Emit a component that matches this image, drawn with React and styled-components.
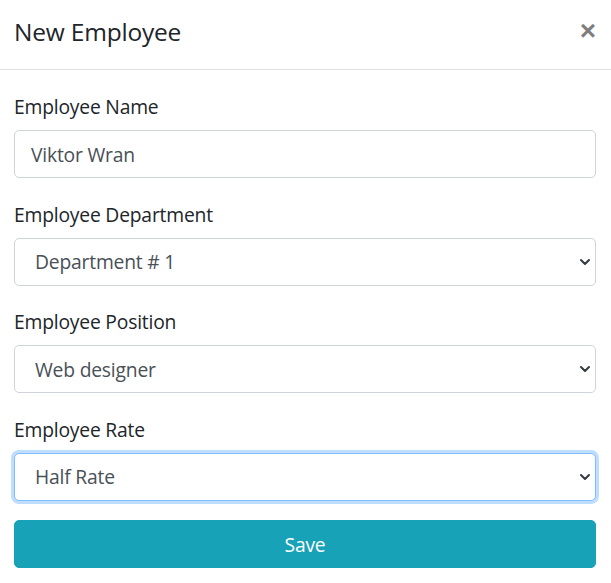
import styled, { createGlobalStyle } from "styled-components";

const GlobalStyle = createGlobalStyle`
  html, body {
    margin: 0;
    padding: 0;
    background: #fff;
  }
  body {
    font-family: "Open Sans", "Noto Sans", "Liberation Sans", sans-serif;
    color: #212529;
  }
  * {
    box-sizing: border-box;
  }
`;

const Modal = styled.div`
  width: 611px;
  background: #fff;
`;

const Header = styled.div`
  display: flex;
  align-items: center;
  justify-content: space-between;
  height: 70px;
  padding: 0 15px 6px 14px;
  border-bottom: 1px solid #dee2e6;
`;

const Title = styled.h5`
  margin: 0;
  font-size: 24.5px;
  font-weight: 400;
  letter-spacing: -0.2px;
  color: #212529;
`;

const CloseBtn = styled.button`
  border: 0;
  background: transparent;
  padding: 0;
  margin-top: -2px;
  font-size: 28px;
  line-height: 1;
  font-weight: 700;
  color: #000;
  opacity: 0.5;
  cursor: pointer;
  font-family: "Liberation Sans", sans-serif;
`;

const Body = styled.form`
  display: flex;
  flex-direction: column;
  padding: 22px 15px 0 14px;
`;

const Group = styled.div`
  display: flex;
  flex-direction: column;
  margin-bottom: 21.5px;
`;

const Label = styled.label`
  font-size: 19.3px;
  line-height: 30px;
  margin-bottom: 8px;
  letter-spacing: -0.2px;
`;

const fieldCss = `
  width: 100%;
  height: 48px;
  padding: 0 16px;
  font-family: inherit;
  font-size: 19.3px;
  letter-spacing: -0.2px;
  color: #495057;
  background-color: #fff;
  border: 1px solid #ced4da;
  border-radius: 5px;
  outline: none;
`;

const Input = styled.input`
  ${fieldCss}
`;

const SelectWrap = styled.div`
  position: relative;
`;

const Select = styled.select`
  ${fieldCss}
  appearance: none;
  padding-left: 20px;
  ${(p) =>
    p.$focused &&
    `
    border-color: #80bdff;
    box-shadow: 0 0 0 3px rgba(0, 123, 255, 0.25);
  `}
`;

const Chevron = styled.svg`
  position: absolute;
  right: 5px;
  top: 50%;
  width: 12px;
  height: 8px;
  margin-top: -4px;
  pointer-events: none;
`;

const SaveBtn = styled.button`
  margin-top: -2px;
  height: 48px;
  width: 100%;
  border: 1px solid #17a2b8;
  border-radius: 5px;
  background: #17a2b8;
  color: #fff;
  font-family: inherit;
  font-size: 19.3px;
  letter-spacing: -0.2px;
  cursor: pointer;
`;

const SelectField = ({ value, options, focused }) => (
  <SelectWrap>
    <Select defaultValue={value} $focused={focused}>
      {options.map((o) => (
        <option key={o}>{o}</option>
      ))}
    </Select>
    <Chevron viewBox="0 0 12 8">
      <path
        d="M2 2l4 4 4-4"
        fill="none"
        stroke="#343a40"
        strokeWidth="2"
        strokeLinecap="round"
        strokeLinejoin="round"
      />
    </Chevron>
  </SelectWrap>
);

const App = () => (
  <>
    <GlobalStyle />
    <Modal>
      <Header>
        <Title>New Employee</Title>
        <CloseBtn type="button">×</CloseBtn>
      </Header>
      <Body onSubmit={(e) => e.preventDefault()}>
        <Group>
          <Label>Employee Name</Label>
          <Input defaultValue="Viktor Wran" />
        </Group>
        <Group>
          <Label>Employee Department</Label>
          <SelectField
            value="Department # 1"
            options={["Department # 1", "Department # 2"]}
          />
        </Group>
        <Group>
          <Label>Employee Position</Label>
          <SelectField
            value="Web designer"
            options={["Web designer", "Developer"]}
          />
        </Group>
        <Group>
          <Label>Employee Rate</Label>
          <SelectField
            value="Half Rate"
            options={["Half Rate", "Full Rate"]}
            focused
          />
        </Group>
        <SaveBtn type="submit">Save</SaveBtn>
      </Body>
    </Modal>
  </>
);

export default App;
